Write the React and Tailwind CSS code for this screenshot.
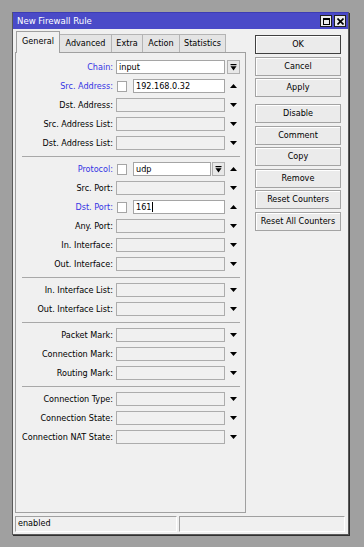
const GROUPS = [
  [
    { label: "Chain", blue: true, kind: "chain", value: "input" },
    { label: "Src. Address", blue: true, kind: "check", value: "192.168.0.32" },
    { label: "Dst. Address" },
    { label: "Src. Address List" },
    { label: "Dst. Address List" },
  ],
  [
    { label: "Protocol", blue: true, kind: "proto", value: "udp" },
    { label: "Src. Port" },
    { label: "Dst. Port", blue: true, kind: "check", value: "161", caret: true },
    { label: "Any. Port" },
    { label: "In. Interface" },
    { label: "Out. Interface" },
  ],
  [{ label: "In. Interface List" }, { label: "Out. Interface List" }],
  [{ label: "Packet Mark" }, { label: "Connection Mark" }, { label: "Routing Mark" }],
  [
    { label: "Connection Type" },
    { label: "Connection State" },
    { label: "Connection NAT State" },
  ],
];

const TABS = [
  { label: "General", w: "w-[44px]", active: true },
  { label: "Advanced", w: "w-[52px]" },
  { label: "Extra", w: "w-[31px]" },
  { label: "Action", w: "w-[37px]" },
  { label: "Statistics", w: "w-[46px]" },
];

const BUTTONS = [
  { label: "OK", mt: "mt-0", def: true },
  { label: "Cancel", mt: "mt-[3px]" },
  { label: "Apply", mt: "mt-[2px]" },
  { label: "Disable", mt: "mt-[7px]" },
  { label: "Comment", mt: "mt-[3px]" },
  { label: "Copy", mt: "mt-[2px]" },
  { label: "Remove", mt: "mt-[3px]" },
  { label: "Reset Counters", mt: "mt-[2px]" },
  { label: "Reset All Counters", mt: "mt-[3px]" },
];

const Tri = ({ up }) => (
  <svg width="7" height="4" viewBox="0 0 7 4">
    <polygon points={up ? "0,4 7,4 3.5,0" : "0,0 7,0 3.5,4"} fill="#000" />
  </svg>
);

const DropIcon = () => (
  <svg width="7" height="7" viewBox="0 0 7 7">
    <rect x="0.5" y="0" width="6" height="1.2" fill="#000" />
    <polygon points="0.5,2.2 6.5,2.2 3.5,6.5" fill="#000" />
  </svg>
);

const DropButton = ({ className }) => (
  <div
    className={`flex h-[14px] w-[13px] shrink-0 items-center justify-center border border-[#b0b0b0] bg-[#e8e8e8] ${className}`}
  >
    <DropIcon />
  </div>
);

const Row = ({ f }) => {
  const filled = f.kind === "check" || f.kind === "proto";
  return (
    <div className="flex h-[19px] pt-[2px]">
      <div
        className={`w-[97px] shrink-0 whitespace-nowrap text-right leading-[14px] ${
          f.blue ? "text-[#3434e4]" : "text-black"
        }`}
      >
        {f.label}:
      </div>
      <div className="ml-[3px] flex h-[14px] w-[109px] shrink-0">
        {f.kind === "chain" && (
          <div className="flex-1 border border-[#a5a5a5] bg-white pl-[2px] leading-[12px]">
            {f.value}
          </div>
        )}
        {filled && (
          <>
            <div className="ml-[1px] mt-[1.5px] h-[11px] w-[10px] shrink-0 border border-[#a5a5a5] bg-white" />
            <div className="ml-[6px] flex flex-1 items-center border border-[#a5a5a5] bg-white pl-[2px] leading-[12px]">
              {f.value}
              {f.caret && <span className="ml-[1px] h-[10px] w-px bg-black" />}
            </div>
            {f.kind === "proto" && <DropButton className="ml-[1px]" />}
          </>
        )}
        {!f.kind && <div className="flex-1 border border-[#acacac] bg-[#f0f0f0]" />}
      </div>
      {f.kind === "chain" ? (
        <DropButton className="ml-[2px]" />
      ) : (
        <div className="ml-[5px] flex h-[14px] w-[7px] items-center">
          <Tri up={!!f.kind} />
        </div>
      )}
    </div>
  );
};

export default function App() {
  return (
    <div className="h-[547px] w-[364px] bg-[#a0a0a0] pl-[12px] pt-[12px] font-['DejaVu_Sans_Condensed','Liberation_Sans',sans-serif] text-[9px] text-black">
      <div className="flex h-[523px] w-[337px] flex-col border border-[#5a5a5a] border-t-[#3c3cb4] bg-[#f0f0f0] shadow-[1px_1px_0_#303030]">
        {/* Title bar */}
        <div className="flex h-[16px] shrink-0 items-center bg-[#4a4ac8] pl-[4px] pr-[2px]">
          <span className="flex-1 text-[9.5px] leading-none text-white">New Firewall Rule</span>
          <div className="flex h-[12px] w-[12px] items-center justify-center border border-[#202020] bg-[#ececec]">
            <div className="h-[7px] w-[7px] border border-black border-t-2" />
          </div>
          <div className="ml-[2px] flex h-[12px] w-[12px] items-center justify-center border border-[#202020] bg-[#ececec]">
            <svg width="7" height="7" viewBox="0 0 7 7">
              <path d="M0.5 0.5L6.5 6.5M6.5 0.5L0.5 6.5" stroke="#000" strokeWidth="1.6" />
            </svg>
          </div>
        </div>

        {/* Body */}
        <div className="flex pl-[2px]">
          <div className="w-[231px] shrink-0 pt-[2px]">
            <div className="flex h-[21px] items-end pl-[1px]">
              {TABS.map((t) =>
                t.active ? (
                  <div
                    key={t.label}
                    className={`relative z-10 -mb-px flex h-[22px] ${t.w} items-center justify-center border-x border-t border-[#a0a0a0] bg-[#f0f0f0] pb-[1px]`}
                  >
                    {t.label}
                  </div>
                ) : (
                  <div
                    key={t.label}
                    className={`flex h-[18px] ${t.w} items-center justify-center border-r border-t border-[#b4b4b4] bg-[#e4e4e4]`}
                  >
                    {t.label}
                  </div>
                )
              )}
            </div>
            <div className="h-[461px] border border-[#a0a0a0] pt-[5px]">
              {GROUPS.map((g, gi) => (
                <div key={gi}>
                  {gi > 0 && <div className="mb-[3px] ml-[6px] mt-[3px] h-px w-[218px] bg-[#a8a8a8]" />}
                  {g.map((f) => (
                    <Row key={f.label} f={f} />
                  ))}
                </div>
              ))}
            </div>
          </div>

          {/* Buttons */}
          <div className="ml-[9px] flex w-[86px] shrink-0 flex-col pt-[6px]">
            {BUTTONS.map((b) => (
              <div
                key={b.label}
                className={`${b.mt} flex h-[19px] items-center justify-center whitespace-nowrap border ${
                  b.def ? "border-[#404040]" : "border-[#a3a3a3]"
                } bg-[#ebebeb] shadow-[inset_1px_1px_0_#fff]`}
              >
                {b.label}
              </div>
            ))}
          </div>
        </div>

        {/* Status bar */}
        <div className="mt-[3px] flex pl-[2px]">
          <div className="flex h-[16px] w-[162px] items-center border border-[#a0a0a0] border-b-white border-r-white pl-[2px]">
            enabled
          </div>
          <div className="ml-[2px] h-[16px] w-[166px] border border-[#a0a0a0] border-b-white border-r-white" />
        </div>
      </div>
    </div>
  );
}
